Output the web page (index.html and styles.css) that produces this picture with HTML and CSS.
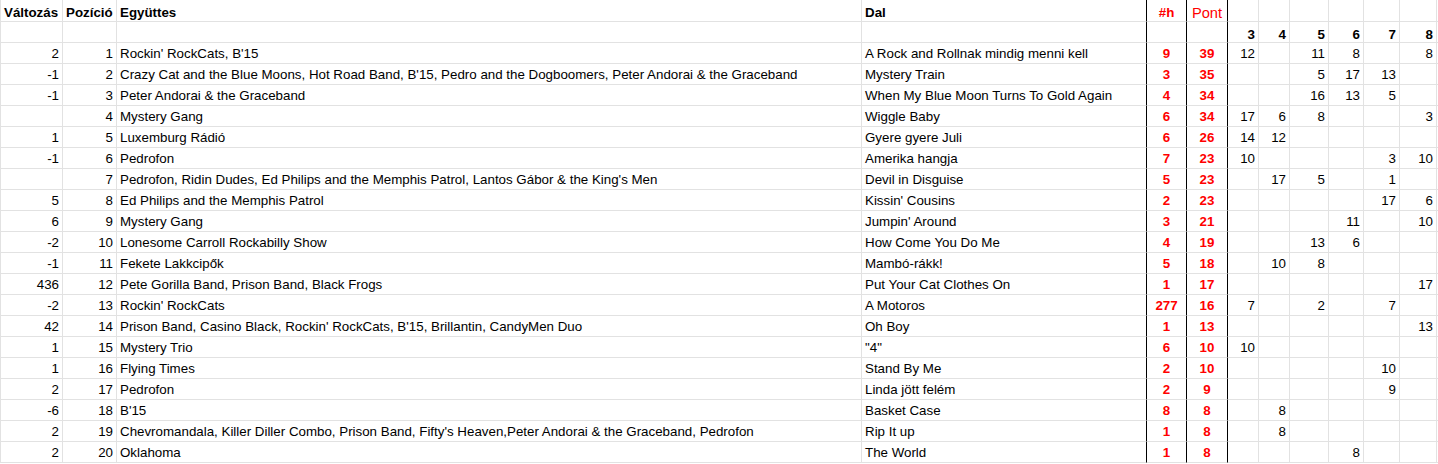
FILE: index.html
```html
<!DOCTYPE html>
<html lang="hu">
<head>
<meta charset="utf-8">
<title>Toplista</title>
<link rel="stylesheet" href="styles.css">
</head>
<body>
<div class="sheet">
  <div class="row head">
    <div class="c b">Változás</div><div class="c b">Pozíció</div><div class="c b">Együttes</div><div class="c b">Dal</div><div class="c ctr red b">#h</div><div class="c ctr red big">Pont</div><div class="c"></div><div class="c"></div><div class="c"></div><div class="c"></div><div class="c"></div><div class="c"></div><div class="c"></div>
  </div>
  <div class="row sub">
    <div class="c"></div><div class="c"></div><div class="c"></div><div class="c"></div><div class="c"></div><div class="c"></div><div class="c r b">3</div><div class="c r b">4</div><div class="c r b">5</div><div class="c r b">6</div><div class="c r b">7</div><div class="c r b">8</div><div class="c"></div>
  </div>
  <div class="row"><div class="c r">2</div><div class="c r">1</div><div class="c">Rockin' RockCats, B'15</div><div class="c">A Rock and Rollnak mindig menni kell</div><div class="c ctr red b">9</div><div class="c ctr red b">39</div><div class="c r">12</div><div class="c r"></div><div class="c r">11</div><div class="c r">8</div><div class="c r"></div><div class="c r">8</div><div class="c"></div></div>
  <div class="row"><div class="c r">-1</div><div class="c r">2</div><div class="c">Crazy Cat and the Blue Moons, Hot Road Band, B'15, Pedro and the Dogboomers, Peter Andorai &amp; the Graceband</div><div class="c">Mystery Train</div><div class="c ctr red b">3</div><div class="c ctr red b">35</div><div class="c r"></div><div class="c r"></div><div class="c r">5</div><div class="c r">17</div><div class="c r">13</div><div class="c r"></div><div class="c"></div></div>
  <div class="row"><div class="c r">-1</div><div class="c r">3</div><div class="c">Peter Andorai &amp; the Graceband</div><div class="c">When My Blue Moon Turns To Gold Again</div><div class="c ctr red b">4</div><div class="c ctr red b">34</div><div class="c r"></div><div class="c r"></div><div class="c r">16</div><div class="c r">13</div><div class="c r">5</div><div class="c r"></div><div class="c"></div></div>
  <div class="row"><div class="c r"></div><div class="c r">4</div><div class="c">Mystery Gang</div><div class="c">Wiggle Baby</div><div class="c ctr red b">6</div><div class="c ctr red b">34</div><div class="c r">17</div><div class="c r">6</div><div class="c r">8</div><div class="c r"></div><div class="c r"></div><div class="c r">3</div><div class="c"></div></div>
  <div class="row"><div class="c r">1</div><div class="c r">5</div><div class="c">Luxemburg Rádió</div><div class="c">Gyere gyere Juli</div><div class="c ctr red b">6</div><div class="c ctr red b">26</div><div class="c r">14</div><div class="c r">12</div><div class="c r"></div><div class="c r"></div><div class="c r"></div><div class="c r"></div><div class="c"></div></div>
  <div class="row"><div class="c r">-1</div><div class="c r">6</div><div class="c">Pedrofon</div><div class="c">Amerika hangja</div><div class="c ctr red b">7</div><div class="c ctr red b">23</div><div class="c r">10</div><div class="c r"></div><div class="c r"></div><div class="c r"></div><div class="c r">3</div><div class="c r">10</div><div class="c"></div></div>
  <div class="row"><div class="c r"></div><div class="c r">7</div><div class="c">Pedrofon, Ridin Dudes, Ed Philips and the Memphis Patrol, Lantos Gábor &amp; the King's Men</div><div class="c">Devil in Disguise</div><div class="c ctr red b">5</div><div class="c ctr red b">23</div><div class="c r"></div><div class="c r">17</div><div class="c r">5</div><div class="c r"></div><div class="c r">1</div><div class="c r"></div><div class="c"></div></div>
  <div class="row"><div class="c r">5</div><div class="c r">8</div><div class="c">Ed Philips and the Memphis Patrol</div><div class="c">Kissin' Cousins</div><div class="c ctr red b">2</div><div class="c ctr red b">23</div><div class="c r"></div><div class="c r"></div><div class="c r"></div><div class="c r"></div><div class="c r">17</div><div class="c r">6</div><div class="c"></div></div>
  <div class="row"><div class="c r">6</div><div class="c r">9</div><div class="c">Mystery Gang</div><div class="c">Jumpin' Around</div><div class="c ctr red b">3</div><div class="c ctr red b">21</div><div class="c r"></div><div class="c r"></div><div class="c r"></div><div class="c r">11</div><div class="c r"></div><div class="c r">10</div><div class="c"></div></div>
  <div class="row"><div class="c r">-2</div><div class="c r">10</div><div class="c">Lonesome Carroll Rockabilly Show</div><div class="c">How Come You Do Me</div><div class="c ctr red b">4</div><div class="c ctr red b">19</div><div class="c r"></div><div class="c r"></div><div class="c r">13</div><div class="c r">6</div><div class="c r"></div><div class="c r"></div><div class="c"></div></div>
  <div class="row"><div class="c r">-1</div><div class="c r">11</div><div class="c">Fekete Lakkcipők</div><div class="c">Mambó-rákk!</div><div class="c ctr red b">5</div><div class="c ctr red b">18</div><div class="c r"></div><div class="c r">10</div><div class="c r">8</div><div class="c r"></div><div class="c r"></div><div class="c r"></div><div class="c"></div></div>
  <div class="row"><div class="c r">436</div><div class="c r">12</div><div class="c">Pete Gorilla Band, Prison Band, Black Frogs</div><div class="c">Put Your Cat Clothes On</div><div class="c ctr red b">1</div><div class="c ctr red b">17</div><div class="c r"></div><div class="c r"></div><div class="c r"></div><div class="c r"></div><div class="c r"></div><div class="c r">17</div><div class="c"></div></div>
  <div class="row"><div class="c r">-2</div><div class="c r">13</div><div class="c">Rockin' RockCats</div><div class="c">A Motoros</div><div class="c ctr red b">277</div><div class="c ctr red b">16</div><div class="c r">7</div><div class="c r"></div><div class="c r">2</div><div class="c r"></div><div class="c r">7</div><div class="c r"></div><div class="c"></div></div>
  <div class="row"><div class="c r">42</div><div class="c r">14</div><div class="c">Prison Band, Casino Black, Rockin' RockCats, B'15, Brillantin, CandyMen Duo</div><div class="c">Oh Boy</div><div class="c ctr red b">1</div><div class="c ctr red b">13</div><div class="c r"></div><div class="c r"></div><div class="c r"></div><div class="c r"></div><div class="c r"></div><div class="c r">13</div><div class="c"></div></div>
  <div class="row"><div class="c r">1</div><div class="c r">15</div><div class="c">Mystery Trio</div><div class="c">"4"</div><div class="c ctr red b">6</div><div class="c ctr red b">10</div><div class="c r">10</div><div class="c r"></div><div class="c r"></div><div class="c r"></div><div class="c r"></div><div class="c r"></div><div class="c"></div></div>
  <div class="row"><div class="c r">1</div><div class="c r">16</div><div class="c">Flying Times</div><div class="c">Stand By Me</div><div class="c ctr red b">2</div><div class="c ctr red b">10</div><div class="c r"></div><div class="c r"></div><div class="c r"></div><div class="c r"></div><div class="c r">10</div><div class="c r"></div><div class="c"></div></div>
  <div class="row"><div class="c r">2</div><div class="c r">17</div><div class="c">Pedrofon</div><div class="c">Linda jött felém</div><div class="c ctr red b">2</div><div class="c ctr red b">9</div><div class="c r"></div><div class="c r"></div><div class="c r"></div><div class="c r"></div><div class="c r">9</div><div class="c r"></div><div class="c"></div></div>
  <div class="row"><div class="c r">-6</div><div class="c r">18</div><div class="c">B'15</div><div class="c">Basket Case</div><div class="c ctr red b">8</div><div class="c ctr red b">8</div><div class="c r"></div><div class="c r">8</div><div class="c r"></div><div class="c r"></div><div class="c r"></div><div class="c r"></div><div class="c"></div></div>
  <div class="row"><div class="c r">2</div><div class="c r">19</div><div class="c">Chevromandala, Killer Diller Combo, Prison Band, Fifty's Heaven,Peter Andorai &amp; the Graceband, Pedrofon</div><div class="c">Rip It up</div><div class="c ctr red b">1</div><div class="c ctr red b">8</div><div class="c r"></div><div class="c r">8</div><div class="c r"></div><div class="c r"></div><div class="c r"></div><div class="c r"></div><div class="c"></div></div>
  <div class="row"><div class="c r">2</div><div class="c r">20</div><div class="c">Oklahoma</div><div class="c">The World</div><div class="c ctr red b">1</div><div class="c ctr red b">8</div><div class="c r"></div><div class="c r"></div><div class="c r"></div><div class="c r">8</div><div class="c r"></div><div class="c r"></div><div class="c"></div></div>
</div>
</body>
</html>
```

FILE: styles.css
```css
html, body {
  margin: 0;
  padding: 0;
  background: #ffffff;
}

.sheet {
  font-family: "Liberation Sans", Arial, sans-serif;
  font-size: 13.33px;
  color: #000000;
}

.row {
  display: grid;
  grid-template-columns: 63px 54px 745px 285px 40px 41px 31px 31px 39px 35px 36px 37px 1fr;
  height: 21px;
}

.row.head {
  height: 22px;
}

.c {
  border-right: 1px solid #e2e2e2;
  border-bottom: 1px solid #e2e2e2;
  padding: 1px 3px 0 3px;
  line-height: 20px;
  white-space: nowrap;
  overflow: hidden;
  min-width: 0;
}

.head .c,
.sub .c {
  padding-top: 3px;
}

.c:first-child {
  border-left: 1px solid #e2e2e2;
}

.c:nth-child(4),
.c:nth-child(5),
.c:nth-child(6) {
  border-right-color: #000000;
}

.r {
  text-align: right;
}

.ctr {
  text-align: center;
}

.b {
  font-weight: bold;
}

.red {
  color: #ff0000;
}

.big {
  font-size: 14.67px;
}
```
